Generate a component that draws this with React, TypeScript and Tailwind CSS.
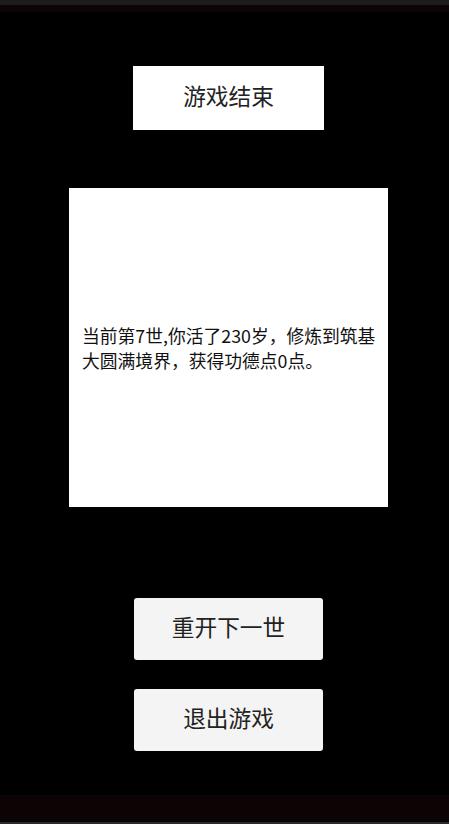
import React from "react";

export default function App() {
  const font = { fontFamily: '"Noto Sans CJK SC", "Noto Sans", sans-serif' };
  return (
    <div className="w-[449px] h-[824px] bg-black flex flex-col overflow-hidden" style={font}>
      <div className="h-[5px] bg-[#1c1c1c]" />
      <div className="h-[7px] bg-[#0b0305]" />
      <div className="flex-1 flex flex-col items-center pl-[8px]">
        <div className="mt-[54px] w-[191px] h-[64px] bg-white flex items-center justify-center pb-[4px] text-[22.7px] leading-none text-[#222]">
          游戏结束
        </div>
        <div className="mt-[58px] w-[319px] h-[319px] bg-white flex items-center pl-[13px] text-[17.8px] leading-[25px] text-[#111]">
          <p className="whitespace-nowrap">
            当前第7世,你活了230岁，修炼到筑基
            <br />
            大圆满境界，获得功德点0点。
          </p>
        </div>
        <button className="mt-[91px] w-[189px] h-[62px] bg-[#f4f4f4] rounded-[3px] flex items-center justify-center pb-[4px] text-[22.7px] leading-none text-[#222]">
          重开下一世
        </button>
        <button className="mt-[29px] w-[189px] h-[62px] bg-[#f4f4f4] rounded-[3px] flex items-center justify-center pb-[4px] text-[22.7px] leading-none text-[#222]">
          退出游戏
        </button>
      </div>
      <div className="h-[27px] bg-[#0c0305]" />
      <div className="h-[2px] bg-[#2a2a2a]" />
    </div>
  );
}
